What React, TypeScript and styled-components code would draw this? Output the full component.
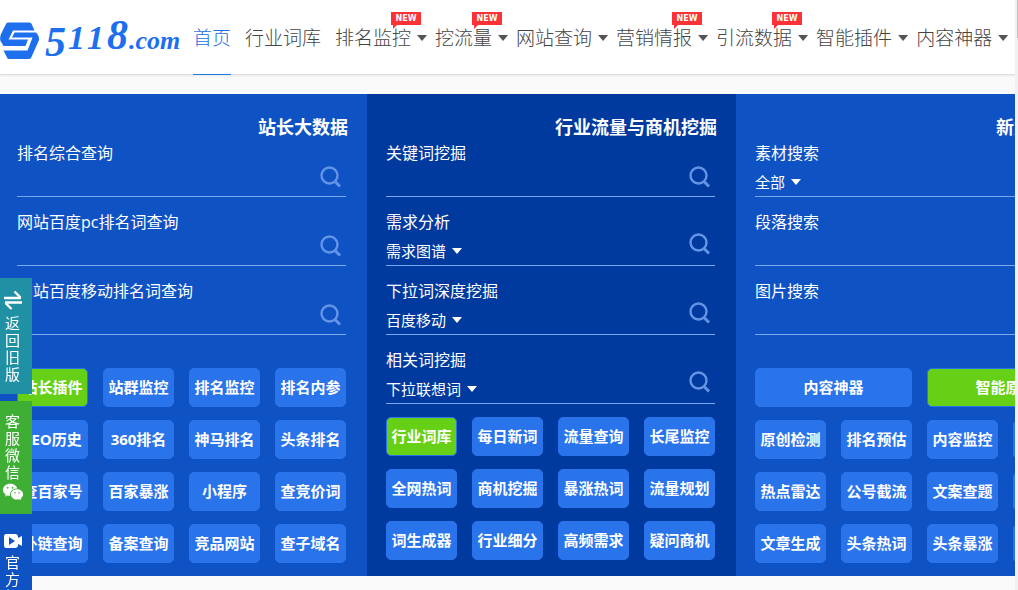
import React from 'react';
import styled, { createGlobalStyle, css } from 'styled-components';
import { RiWechatFill } from 'react-icons/ri';

const GlobalStyle = createGlobalStyle`
  * { box-sizing: border-box; }
  body {
    margin: 0;
    background: #fafafa;
    font-family: "Open Sans", "Noto Sans CJK SC", sans-serif;
    color: #fff;
  }
  button, input, select { font: inherit; color: inherit; }
`;

const Page = styled.div`
  min-height: 100vh;
  overflow: hidden;
`;

const Header = styled.header`
  display: flex;
  height: 75px;
  background: #fff;
  border-bottom: 1px solid #e0e0e0;
  box-shadow: 0 1px 2px rgba(0, 0, 0, 0.08);
`;

const LogoLink = styled.a`
  flex: none;
  width: 193px;
  height: 74px;
`;

const Nav = styled.nav`
  display: flex;
  flex: none;
  gap: 8px;
`;

const NavLink = styled.a<{ $active?: boolean; $plain?: boolean }>`
  position: relative;
  display: flex;
  align-items: center;
  gap: 6px;
  height: 75px;
  padding-top: 2px;
  margin-right: ${(p) => (p.$plain ? '6px' : '0')};
  border-bottom: 1px solid ${(p) => (p.$active ? '#1b7be0' : 'transparent')};
  color: ${(p) => (p.$active ? '#1b6fe0' : '#444')};
  font-size: 19px;
  font-weight: 300;
  line-height: 24px;
  text-decoration: none;
  white-space: nowrap;
`;

const NavText = styled.span`
  position: relative;
`;

const Caret = styled.span<{ $color?: string }>`
  flex: none;
  width: 10px;
  height: 6px;
  background: ${(p) => p.$color ?? '#fff'};
  clip-path: polygon(0 0, 100% 0, 50% 100%);
  pointer-events: none;
`;

const NewBadge = styled.span`
  position: absolute;
  top: -14px;
  right: -10px;
  width: 30px;
  height: 13px;
  background: #fb3236;
  color: #fff;
  font: bold 8px/13px "DejaVu Sans", sans-serif;
  text-align: center;

  &::after {
    content: "";
    position: absolute;
    top: 13px;
    left: 2px;
    border-top: 4px solid #fb3236;
    border-right: 4px solid transparent;
  }
`;

const Board = styled.main`
  display: grid;
  grid-template-columns: repeat(3, minmax(369px, 1fr));
  margin: 19px 0 0 -2px;
`;

const Column = styled.section<{ $dark?: boolean }>`
  padding: 21px 21px 13px 19px;
  background: ${(p) => (p.$dark ? '#003a9e' : '#0e52c4')};
`;

const ColumnTitle = styled.h2`
  margin: 0 -2px 2px 0;
  font-size: 18px;
  font-weight: 700;
  line-height: 24px;
  text-align: right;
`;

const FieldList = styled.div`
  display: grid;
  gap: 13px;
`;

const FieldBox = styled.form`
  border-bottom: 1px solid #78a8f4;
`;

const FieldLabel = styled.label`
  display: block;
  font-size: 16px;
  line-height: 24px;
`;

const FieldRow = styled.div`
  display: flex;
  align-items: flex-end;
  height: 31px;
`;

const SelectWrap = styled.span`
  display: flex;
  align-items: center;
  gap: 5px;
  height: 28px;
`;

const Select = styled.select`
  appearance: none;
  height: 28px;
  padding: 0;
  border: 0;
  background: transparent;
  font-size: 15px;
  line-height: 28px;
  outline: none;
`;

const TextInput = styled.input`
  flex: 1;
  min-width: 0;
  height: 28px;
  padding: 0 8px 0 0;
  border: 0;
  background: transparent;
  font-size: 15px;
  outline: none;
`;

const SearchButton = styled.button<{ $raised: boolean }>`
  display: flex;
  flex: none;
  margin: 0 4px ${(p) => (p.$raised ? '10px' : '8px')} 0;
  padding: 0;
  border: 0;
  background: transparent;
  color: #6494e4;
  cursor: pointer;
`;

const ToolGrid = styled.div<{ $gap: number }>`
  display: grid;
  grid-template-columns: repeat(4, 1fr);
  gap: 13px 15px;
  margin-top: ${(p) => p.$gap}px;
`;

const ToolButton = styled.button<{ $hot?: boolean; $wide?: boolean }>`
  height: 39px;
  padding: 0 0 2px;
  border: 1px solid #2973eb;
  border-radius: 5px;
  background: #2973eb;
  font-size: 15px;
  font-weight: 700;
  line-height: 24px;
  white-space: nowrap;
  cursor: pointer;
  ${(p) => p.$hot && css`background: #66d016;`}
  ${(p) => p.$wide && css`grid-column: span 2;`}
`;

const SideBar = styled.aside`
  position: fixed;
  top: 278px;
  left: 0;
  display: flex;
  flex-direction: column;
  gap: 7px;
`;

const SideTab = styled.a<{ $bg: string; $iconGap?: number }>`
  display: flex;
  flex-direction: column;
  align-items: center;
  gap: ${(p) => p.$iconGap ?? 0}px;
  width: 32px;
  padding: 12px 7px 11px 0;
  background: ${(p) => p.$bg};
  color: #fff;
  font-size: 15px;
  line-height: 17px;
  text-decoration: none;
`;

const SideText = styled.span`
  width: 15px;
  word-break: break-all;
`;

const ScrollTrack = styled.div`
  position: fixed;
  top: 0;
  right: 0;
  bottom: 0;
  width: 3px;
  background: #f1f1f1;
`;

const ScrollThumb = styled.div`
  width: 1px;
  height: 38px;
  margin-left: auto;
  background: #c1c1c1;
`;

const Logo = () => (
  <svg width="184" height="74" viewBox="0 0 184 74" aria-label="5118.com" role="img">
    <g fill="#1d6fee">
      <path d="M8 22.500H29.500Q31 22.500 31.600 24L34.500 30.500H13L8.500 39.500H28L25.500 46H3.500L.5 41Q-.5 38 1 34L6 24Q6.500 22.500 8 22.500Z" />
      <path d="M14.500 32.500H36Q39.500 36 39 40L31.500 57Q31 59 29 59H9Q7.500 59 7 57.500L3.500 50.500H27.500L32.500 37.500H12Z" />
      <g fontFamily="Liberation Serif, serif" fontStyle="italic" fontWeight="700">
        <text fontSize="42">
          <tspan x="45" y="56">5</tspan>
          <tspan x="107" y="49">8</tspan>
        </text>
        <text y="49" fontSize="34">
          <tspan x="68">1</tspan>
          <tspan x="87">1</tspan>
        </text>
        <text x="129" y="49" fontSize="26">.com</text>
      </g>
    </g>
  </svg>
);

const SearchIcon = () => (
  <svg width="22" height="22" viewBox="0 0 22 22" fill="none" stroke="currentColor" strokeWidth="2.400" aria-hidden="true">
    <circle cx="9.500" cy="9.500" r="8" />
    <path d="M15 15.500L20 20.500" strokeWidth="3" />
  </svg>
);

const SwapIcon = () => (
  <svg width="20" height="20" viewBox="0 0 20 20" fill="none" stroke="#fff" strokeWidth="2.400" aria-hidden="true">
    <path d="M1 8H18M19 12.500H2" />
    <path d="M11.500 1.500L17.500 7.500M8.500 19L2.500 13" />
  </svg>
);

const VideoIcon = () => (
  <svg width="20" height="16" viewBox="0 0 20 16" aria-hidden="true">
    <path fill="#fff" fillRule="evenodd" d="M3 1H12Q15 1 15 4V5L19 3V13L15 11V12Q15 15 12 15H3Q1 15 1 12V4Q1 1 3 1ZM6 4V12L12 8Z" />
  </svg>
);

interface NavEntry { text: string; menu?: boolean; isNew?: boolean; active?: boolean }

const navEntries: NavEntry[] = [
  { text: '首页', active: true },
  { text: '行业词库' },
  { text: '排名监控', menu: true, isNew: true },
  { text: '挖流量', menu: true, isNew: true },
  { text: '网站查询', menu: true },
  { text: '营销情报', menu: true, isNew: true },
  { text: '引流数据', menu: true, isNew: true },
  { text: '智能插件', menu: true },
  { text: '内容神器', menu: true },
];

interface FieldData { label: string; option?: string }
interface ToolData { text: string; hot?: boolean; wide?: boolean }
interface ColumnData { title: string; dark?: boolean; gap: number; fields: FieldData[]; tools: ToolData[] }

const tools = (names: string): ToolData[] => names.split(' ').map((text) => ({ text }));

const columns: ColumnData[] = [
  {
    title: '站长大数据',
    gap: 33,
    fields: [{ label: '排名综合查询' }, { label: '网站百度pc排名词查询' }, { label: '网站百度移动排名词查询' }],
    tools: [
      { text: '站长插件', hot: true },
      ...tools('站群监控 排名监控 排名内参 SEO历史 360排名 神马排名 头条排名 查百家号 百家暴涨 小程序 查竞价词 外链查询 备案查询 竞品网站 查子域名'),
    ],
  },
  {
    title: '行业流量与商机挖掘',
    dark: true,
    gap: 13,
    fields: [
      { label: '关键词挖掘' },
      { label: '需求分析', option: '需求图谱' },
      { label: '下拉词深度挖掘', option: '百度移动' },
      { label: '相关词挖掘', option: '下拉联想词' },
    ],
    tools: [
      { text: '行业词库', hot: true },
      ...tools('每日新词 流量查询 长尾监控 全网热词 商机挖掘 暴涨热词 流量规划 词生成器 行业细分 高频需求 疑问商机'),
    ],
  },
  {
    title: '新媒体运营',
    gap: 33,
    fields: [{ label: '素材搜索', option: '全部' }, { label: '段落搜索' }, { label: '图片搜索' }],
    tools: [
      { text: '内容神器', wide: true },
      { text: '智能原创', hot: true, wide: true },
      ...tools('原创检测 排名预估 内容监控 更多 热点雷达 公号截流 文案查题 更多 文章生成 头条热词 头条暴涨 更多'),
    ],
  },
];

const Field = ({ id, label, option }: FieldData & { id: string }) => (
  <FieldBox onSubmit={(e) => e.preventDefault()}>
    <FieldLabel htmlFor={id}>{label}</FieldLabel>
    <FieldRow>
      {option && (
        <SelectWrap>
          <Select aria-label={`${label}类型`}>
            <option>{option}</option>
          </Select>
          <Caret />
        </SelectWrap>
      )}
      <TextInput id={id} type="text" />
      <SearchButton type="submit" aria-label="搜索" $raised={!!option}>
        <SearchIcon />
      </SearchButton>
    </FieldRow>
  </FieldBox>
);

export default function App() {
  return (
    <Page>
      <GlobalStyle />
      <Header>
        <LogoLink href="#"><Logo /></LogoLink>
        <Nav>
          {navEntries.map((n) => (
            <NavLink key={n.text} href="#" $active={n.active} $plain={!n.menu}>
              <NavText>
                {n.text}
                {n.isNew && <NewBadge>NEW</NewBadge>}
              </NavText>
              {n.menu && <Caret $color="#555" />}
            </NavLink>
          ))}
        </Nav>
      </Header>
      <Board>
        {columns.map((c, ci) => (
          <Column key={c.title} $dark={c.dark}>
            <ColumnTitle>{c.title}</ColumnTitle>
            <FieldList>
              {c.fields.map((f, fi) => (
                <Field key={f.label} id={`field-${ci}-${fi}`} {...f} />
              ))}
            </FieldList>
            <ToolGrid $gap={c.gap}>
              {c.tools.map((t, ti) => (
                <ToolButton key={ti} type="button" $hot={t.hot} $wide={t.wide}>{t.text}</ToolButton>
              ))}
            </ToolGrid>
          </Column>
        ))}
      </Board>
      <SideBar>
        <SideTab href="#" $bg="#2090a4" $iconGap={5}>
          <SwapIcon />
          <SideText>返回旧版</SideText>
        </SideTab>
        <SideTab href="#" $bg="#3eae35">
          <SideText>客服微信</SideText>
          <RiWechatFill size={22} />
        </SideTab>
        <SideTab href="#" $bg="#0e52c4" $iconGap={5}>
          <VideoIcon />
          <SideText>官方视频</SideText>
        </SideTab>
      </SideBar>
      <ScrollTrack><ScrollThumb /></ScrollTrack>
    </Page>
  );
}
